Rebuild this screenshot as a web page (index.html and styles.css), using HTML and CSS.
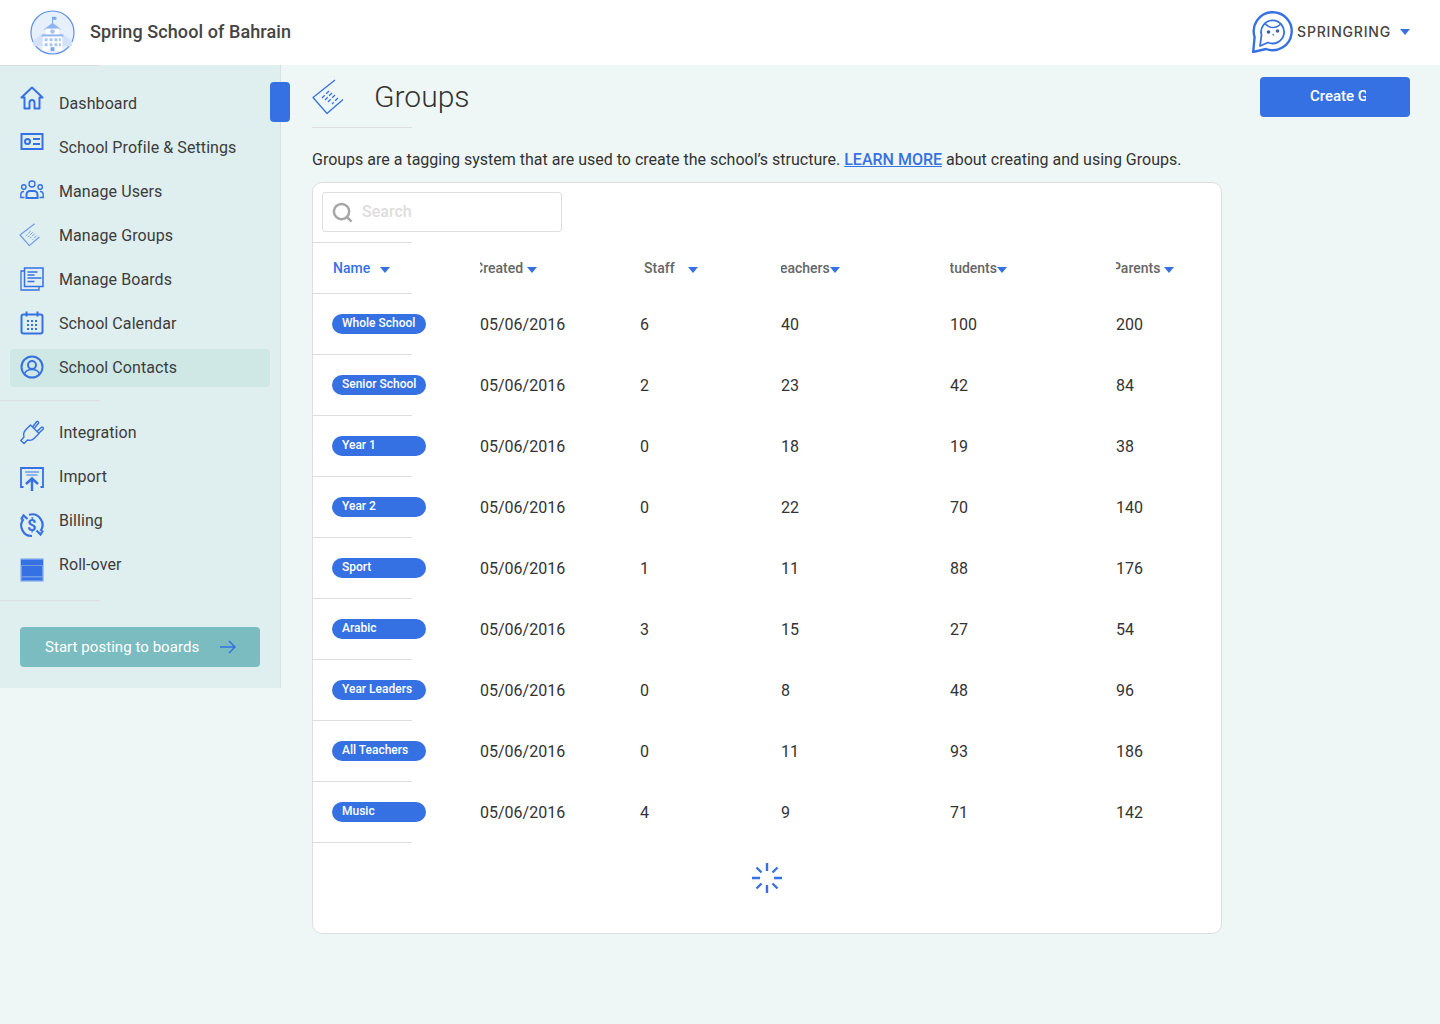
FILE: index.html
```html
<!DOCTYPE html>
<html lang="en">
<head>
  <meta charset="UTF-8" />
  <title>Groups</title>
  <link rel="stylesheet" href="styles.css">
</head>
<body>
  <header class="topbar">
    <div class="school">
      <svg class="school-logo" viewBox="0 0 46 46">
        <circle cx="23" cy="23" r="22" fill="#e6effc" stroke="#5b8fe8" stroke-width="1.2"/>
        <path d="M3 33c6-8 12-10 20-10s14 2 20 10v4H3z" fill="#d3e2f9"/>
        <path d="M23 7v7" stroke="#7ea6ec"/>
        <path d="M23 7h4v3h-4z" fill="#7ea6ec"/>
        <path d="M14 20l9-7 9 7z" fill="#8fb3f0"/>
        <rect x="16" y="19" width="14" height="7" fill="#fff"/>
        <circle cx="23" cy="22" r="2.4" fill="#a9c5f4"/>
        <rect x="12" y="25" width="22" height="2.5" fill="#8fb3f0"/>
        <rect x="13" y="27" width="20" height="15" fill="#fff"/>
        <path d="M15 29h3v3h-3zM20 29h3v3h-3zM25 29h3v3h-3zM29.500 29h2v3h-2zM15 34h3v3h-3zM20 34h3v3h-3zM25 34h3v3h-3zM29.500 34h2v3h-2z" fill="#a9c5f4"/>
        <rect x="21" y="38" width="4" height="4" fill="#7ea6ec"/>
      </svg>
      <span class="school-name">Spring School of Bahrain</span>
    </div>
    <div class="account">
      <svg class="owl" viewBox="0 0 41 42" fill="none" stroke="#3671e3" stroke-linejoin="round">
        <path d="M1.200 41L2.600 26A19 19 0 1 1 14 38z" stroke-width="2.400"/>
        <path d="M8 35l1.500-11A11.500 11.500 0 1 1 16 31.500z" stroke-width="1.800"/>
        <path d="M13 12.500c2.500 3 5 4 8 4s5.500-1 8-4" stroke-width="1.500"/>
        <circle cx="16.500" cy="21" r="1.800" fill="#3b5fa8" stroke="none"/>
        <circle cx="25.500" cy="20" r="1.800" fill="#3b5fa8" stroke="none"/>
        <path d="M20 23.500l2-.8-.4 2.300z" fill="#3671e3" stroke="none"/>
      </svg>
      <span class="account-name">SPRINGRING</span>
      <span class="caret caret-big"></span>
    </div>
  </header>

  <div class="layout">
    <aside class="sidebar">
      <div class="rule"></div>
      <span class="sidebar-tab"></span>
      <ul class="nav nav-first">
        <li class="nav-item">
          <svg class="nav-icon up-6" viewBox="0 0 24 24" fill="none" stroke="#3671e3" stroke-width="2" stroke-linejoin="round"><path d="M1.500 11.500L12 1.500l10.500 10h-3v11h-5v-6a2.500 2.500 0 0 0-5 0v6h-5v-11z"/></svg>
          <span>Dashboard</span>
        </li>
        <li class="nav-item">
          <svg class="nav-icon up-6" viewBox="0 0 24 24" fill="none" stroke="#3671e3" stroke-width="2"><rect x="1.500" y="4" width="21" height="15"/><circle cx="7.500" cy="11.500" r="2.500"/><path d="M13 9h7M13 14h7"/></svg>
          <span>School Profile &amp; Settings</span>
        </li>
        <li class="nav-item">
          <svg class="nav-icon" viewBox="0 0 24 24" fill="none" stroke="#3671e3" stroke-width="1.400"><circle cx="12" cy="5" r="3"/><circle cx="3.800" cy="8" r="2.200"/><circle cx="20.200" cy="8" r="2.200"/><path d="M6.500 19v-3.500a3.500 3.500 0 0 1 3.500-3.500h4a3.500 3.500 0 0 1 3.500 3.500v3.500z" stroke-width="2"/><path d="M4.500 18.500H.8v-3.500A3 3 0 0 1 4 12.500M19.500 18.500h3.700v-3.500a3 3 0 0 0-3.200-2.500"/></svg>
          <span>Manage Users</span>
        </li>
        <li class="nav-item">
          <svg class="nav-icon" viewBox="3 0 32 36" fill="none" stroke="#6f9bec" stroke-width="1.800"><path d="M23 1L1 18l14 16 15-13" stroke-linejoin="round"/><path d="M17 12l-7 7M20 14l-7 7M23 16l-7 7M26 19l-6 6" stroke-width="1.500" stroke-dasharray="5 2"/></svg>
          <span>Manage Groups</span>
        </li>
        <li class="nav-item">
          <svg class="nav-icon" viewBox="0 0 24 24" fill="none" stroke="#3671e3" stroke-width="1.300"><path d="M4.500 4H1v19h18v-4"/><rect x="4.500" y="1" width="18.500" height="18.500" fill="#dfeeee" stroke-width="1.500"/><path d="M7.500 5h10M7.500 8h7M7.500 11h14M7.500 14.500h7" stroke-width="1.500"/></svg>
          <span>Manage Boards</span>
        </li>
        <li class="nav-item">
          <svg class="nav-icon" viewBox="0 0 24 24" fill="none" stroke="#3671e3" stroke-width="2"><rect x="1.500" y="3.500" width="21" height="19" rx="2"/><path d="M6.500 0.500v5M17.500 0.500v5"/><path d="M7 10h2M11 10h2M15 10h2M7 14h2M11 14h2M15 14h2M7 18h2M11 18h2M15 18h2" stroke-width="1.800"/></svg>
          <span>School Calendar</span>
        </li>
        <li class="nav-item nav-item-active">
          <svg class="nav-icon" viewBox="0 0 24 24" fill="none" stroke="#3671e3" stroke-width="2"><circle cx="12" cy="12" r="10.500"/><circle cx="12" cy="10" r="4"/><path d="M4.500 19c1-3 4-4.500 7.500-4.500s6.500 1.500 7.500 4.500" stroke-width="1.500"/></svg>
          <span>School Contacts</span>
        </li>
      </ul>
      <div class="rule rule-mid"></div>
      <ul class="nav nav-second">
        <li class="nav-item">
          <svg class="nav-icon" viewBox="0 0 24 24" fill="none" stroke="#3671e3" stroke-width="1.400" stroke-linejoin="round"><path d="M.8 20.500l3.200 3 3.500-3.500c2.500.8 5 0 6.500-1.500l5-5-8.500-8.500-5 5C3.800 12 3.200 14.500 4 17z"/><path d="M12.500 7l4.300-5.500c.8-.8 2.500.8 1.700 1.700L14.500 8M17 11.500l4.500-4.300c.8-.8 2.500.8 1.700 1.700L18.800 13.300"/></svg>
          <span>Integration</span>
        </li>
        <li class="nav-item">
          <svg class="nav-icon down-2" viewBox="0 0 24 24" fill="none" stroke="#3671e3" stroke-width="1.800"><path d="M3.500 20H1V1h22v19h-2.500"/><path d="M5 5h14M6.500 8h11" stroke="#6f9bec" stroke-width="1.500"/><path d="M12 24V11.500M6 17l6-5.500 6 5.500" stroke-width="2.400"/></svg>
          <span>Import</span>
        </li>
        <li class="nav-item">
          <svg class="nav-icon down-8" viewBox="0 0 24 24" fill="none" stroke="#3671e3" stroke-width="2.200"><path d="M3.500 6A10.500 10.500 0 0 0 12 23M9 1.800A10.500 10.500 0 0 1 20.500 18"/><path d="M1 6.500L3.500 2.500 7.500 6M16.500 17.500L20.500 21.500 23 17.500"/><text x="12" y="18" text-anchor="middle" class="dollar">$</text></svg>
          <span>Billing</span>
        </li>
        <li class="nav-item">
          <svg class="nav-icon down-10" viewBox="0 0 24 24"><rect x="0.500" y="0.500" width="23" height="23" fill="#6f9bec"/><rect x="1" y="2" width="22" height="5" fill="#3671e3"/><rect x="2" y="8" width="20" height="10" fill="#3671e3"/><rect x="2" y="19.500" width="20" height="2.500" fill="#3671e3"/></svg>
          <span>Roll-over</span>
        </li>
      </ul>
      <div class="rule rule-low"></div>
      <button class="post-btn">
        <span>Start posting to boards</span>
        <svg class="post-arrow" viewBox="0 0 16 14" fill="none" stroke="#3671e3" stroke-width="1.500"><path d="M0 7h15M9 1l6 6-6 6"/></svg>
      </button>
    </aside>

    <main class="content">
      <div class="page-head">
        <div class="page-title">
          <svg class="title-icon" viewBox="0 0 32 36" fill="none" stroke="#3671e3" stroke-width="1.300"><path d="M23 1L1 18.500l14 16L31 20.500" stroke-linejoin="round"/><path d="M17 12l-7 7M20 14l-7 7M23 16l-7 7M26 19l-6 6" stroke-dasharray="4 2"/></svg>
          <h1>Groups</h1>
        </div>
        <button class="create-btn"><span>Create Group</span></button>
      </div>
      <div class="title-rule"></div>
      <p class="intro">Groups are a tagging system that are used to create the school’s structure. <a href="#">LEARN MORE</a> about creating and using Groups.</p>

      <section class="card">
        <div class="search">
          <svg class="search-icon" viewBox="0 0 22 22" fill="none" stroke="#a6a6a6" stroke-width="2.600"><circle cx="10" cy="10" r="8"/><path d="M16 16l4.500 4.500"/></svg>
          <span>Search</span>
        </div>
        <div class="grid-row head-row">
          <div class="name-cell head-name"><span>Name</span><i class="caret caret-name"></i></div>
          <div class="head-cell"><span class="clip-created">Created</span><i class="caret caret-gap"></i></div>
          <div class="head-cell head-staff"><span>Staff</span><i class="caret caret-staff"></i></div>
          <div class="head-cell"><span class="clip-teachers">Teachers</span><i class="caret"></i></div>
          <div class="head-cell"><span class="clip-students">Students</span><i class="caret"></i></div>
          <div class="head-cell"><span class="clip-parents">Parents</span><i class="caret caret-gap"></i></div>
        </div>
        <div class="grid-row"><div class="name-cell"><span class="pill">Whole School</span></div><div>05/06/2016</div><div>6</div><div>40</div><div>100</div><div>200</div></div>
        <div class="grid-row"><div class="name-cell"><span class="pill">Senior School</span></div><div>05/06/2016</div><div>2</div><div>23</div><div>42</div><div>84</div></div>
        <div class="grid-row"><div class="name-cell"><span class="pill">Year 1</span></div><div>05/06/2016</div><div>0</div><div>18</div><div>19</div><div>38</div></div>
        <div class="grid-row"><div class="name-cell"><span class="pill">Year 2</span></div><div>05/06/2016</div><div>0</div><div>22</div><div>70</div><div>140</div></div>
        <div class="grid-row"><div class="name-cell"><span class="pill">Sport</span></div><div>05/06/2016</div><div>1</div><div>11</div><div>88</div><div>176</div></div>
        <div class="grid-row"><div class="name-cell"><span class="pill">Arabic</span></div><div>05/06/2016</div><div>3</div><div>15</div><div>27</div><div>54</div></div>
        <div class="grid-row"><div class="name-cell"><span class="pill">Year Leaders</span></div><div>05/06/2016</div><div>0</div><div>8</div><div>48</div><div>96</div></div>
        <div class="grid-row"><div class="name-cell"><span class="pill">All Teachers</span></div><div>05/06/2016</div><div>0</div><div>11</div><div>93</div><div>186</div></div>
        <div class="grid-row"><div class="name-cell"><span class="pill">Music</span></div><div>05/06/2016</div><div>4</div><div>9</div><div>71</div><div>142</div></div>
        <div class="loading">
          <svg class="spinner" viewBox="0 0 30 30" fill="none" stroke="#3671e3" stroke-width="2.400"><path d="M15 0v8M15 22v8M0 15h8M22 15h8M4.500 4.500l5 5M20.500 20.500l5 5M25.500 4.500l-5 5M9.500 20.500l-5 5"/></svg>
        </div>
      </section>
    </main>
  </div>
</body>
</html>
```

FILE: styles.css
```css
* {
  box-sizing: border-box;
}
body {
  margin: 0;
  min-height: 1024px;
  background-color: #eff7f6;
  color: #333;
  font-family: Roboto, 'Liberation Sans', sans-serif;
  font-size: 16px;
}
ul {
  list-style: none;
  margin: 0;
  padding: 0;
}
button {
  border: none;
  font-family: inherit;
  cursor: pointer;
}

/* top bar */
.topbar {
  height: 65px;
  background-color: #fff;
  display: flex;
  justify-content: space-between;
  align-items: center;
  padding: 0 30px 2px;
}
.school {
  display: flex;
  align-items: center;
  gap: 15px;
}
.school-logo {
  width: 45px;
  height: 45px;
  margin-top: 2px;
}
.school-name {
  font-size: 18px;
  font-weight: 500;
  letter-spacing: 0.09px;
  color: #444;
}
.account {
  display: flex;
  align-items: center;
}
.owl {
  width: 41px;
  height: 42px;
  margin-right: 4px;
}
.account-name {
  font-family: Inter, sans-serif;
  font-size: 14px;
  font-weight: 500;
  letter-spacing: 0.8px;
  color: #444;
  margin-right: 9px;
}
.caret {
  display: inline-block;
  width: 0;
  height: 0;
  border-left: 5.5px solid transparent;
  border-right: 5.5px solid transparent;
  border-top: 6px solid #3671e3;
}

/* sidebar */
.layout {
  display: flex;
  align-items: flex-start;
}
.sidebar {
  position: relative;
  width: 281px;
  height: 623px;
  flex-shrink: 0;
  background-color: #dfeeee;
  border-right: 1px solid #dcdfe2;
}
.rule {
  width: 100px;
  height: 1px;
  background-color: #dedede;
}
.rule-mid {
  margin-top: 13px;
}
.rule-low {
  margin-top: 16px;
}
.sidebar-tab {
  position: absolute;
  left: 270px;
  top: 17px;
  width: 20px;
  height: 40px;
  border-radius: 4px;
  background-color: #3671e3;
}
.nav {
  display: flex;
  flex-direction: column;
  gap: 6px;
  padding: 0 10px;
}
.nav-first {
  margin-top: 19px;
}
.nav-second {
  margin-top: 13px;
}
.nav-item {
  height: 38px;
  display: flex;
  align-items: center;
  gap: 15px;
  padding: 0 0 2px 10px;
  border-radius: 4px;
  color: #3c3c3c;
  letter-spacing: 0.08px;
}
.nav-item-active {
  width: 260px;
  background-color: #cfe8e6;
}
.nav-icon {
  width: 24px;
  height: 24px;
  flex-shrink: 0;
  overflow: visible;
}
.up-6 {
  margin-top: -10px;
}
.down-2 {
  margin-top: 6px;
}
.down-8 {
  margin-top: 9px;
}
.down-10 {
  margin-top: 11px;
}
.dollar {
  font-family: Roboto, sans-serif;
  font-size: 16px;
  font-weight: 700;
  fill: #3671e3;
  stroke: none;
}
.post-btn {
  display: flex;
  align-items: center;
  justify-content: space-between;
  width: 240px;
  height: 40px;
  margin: 26px 0 0 20px;
  padding: 0 24px 0 25px;
  border-radius: 4px;
  background-color: #7abcbf;
  color: #fff;
  font-size: 15px;
  letter-spacing: 0.05px;
}
.post-arrow {
  width: 16px;
  height: 14px;
}

/* main */
.content {
  flex: 1;
  padding: 12px 30px 0 31px;
}
.page-head {
  display: flex;
  justify-content: space-between;
  align-items: flex-start;
}
.page-title {
  display: flex;
  align-items: center;
  gap: 30px;
  height: 40px;
}
.title-icon {
  width: 32px;
  height: 36px;
}
h1 {
  margin: 0 0 2px;
  font-size: 30px;
  font-weight: 300;
  color: #333;
}
.create-btn {
  width: 150px;
  height: 40px;
  padding: 0 0 2px 50px;
  text-align: left;
  border-radius: 4px;
  background-color: #3671e3;
  color: #fff;
  font-size: 15px;
  font-weight: 500;
}
.create-btn span {
  display: block;
  width: 56px;
  overflow: hidden;
  white-space: nowrap;
}
.title-rule {
  width: 100px;
  height: 1px;
  margin-top: 10px;
  background-color: #dedede;
}
.intro {
  margin: 22px 0 13px;
  line-height: 19px;
  color: #333;
}
.intro a {
  color: #3671e3;
  font-weight: 500;
}

/* table card */
.card {
  width: 910px;
  height: 752px;
  padding: 9px 0 0;
  background-color: #fff;
  border: 1px solid #dedede;
  border-radius: 10px;
}
.search {
  display: flex;
  align-items: center;
  gap: 9px;
  width: 240px;
  height: 40px;
  margin: 0 0 10px 9px;
  padding: 0 0 2px 9px;
  border: 1px solid #dedede;
  border-radius: 3px;
  color: #ddd;
  font-weight: 500;
}
.search-icon {
  width: 21px;
  height: 21px;
  margin-top: 2px;
}
.grid-row {
  display: grid;
  grid-template-columns: 167px 160px 141px 169px 166px 1fr;
  height: 61px;
  align-items: center;
  color: #333;
}
.name-cell {
  width: 99px;
  height: 100%;
  display: flex;
  align-items: center;
  padding-left: 19px;
  border-bottom: 1px solid #dedede;
}
.pill {
  flex-shrink: 0;
  width: 94px;
  height: 20px;
  padding-left: 10px;
  border-radius: 10px;
  background-color: #3671e3;
  color: #fff;
  font-size: 12px;
  font-weight: 500;
  line-height: 18px;
  white-space: nowrap;
}
.head-row {
  height: 52px;
  color: #666;
  font-size: 14px;
}
.head-name {
  padding-left: 20px;
  color: #3671e3;
  font-weight: 500;
  border-top: 1px solid #dedede;
}
.head-cell {
  display: flex;
  align-items: center;
  overflow: hidden;
  white-space: nowrap;
  font-weight: 500;
}
.head-row .caret {
  flex-shrink: 0;
  margin-top: 3px;
}
.head-staff {
  padding-left: 4px;
}
.caret-name {
  margin-left: 10px;
}
.caret-gap {
  margin-left: 4px;
}
.caret-staff {
  margin-left: 13px;
}
.clip-created {
  margin-left: -6px;
}
.clip-teachers {
  margin-left: -9px;
}
.clip-students {
  margin-left: -9px;
}
.clip-parents {
  margin-left: -4px;
}
.loading {
  display: flex;
  justify-content: center;
  padding-top: 20px;
}
.spinner {
  width: 30px;
  height: 30px;
}
```
